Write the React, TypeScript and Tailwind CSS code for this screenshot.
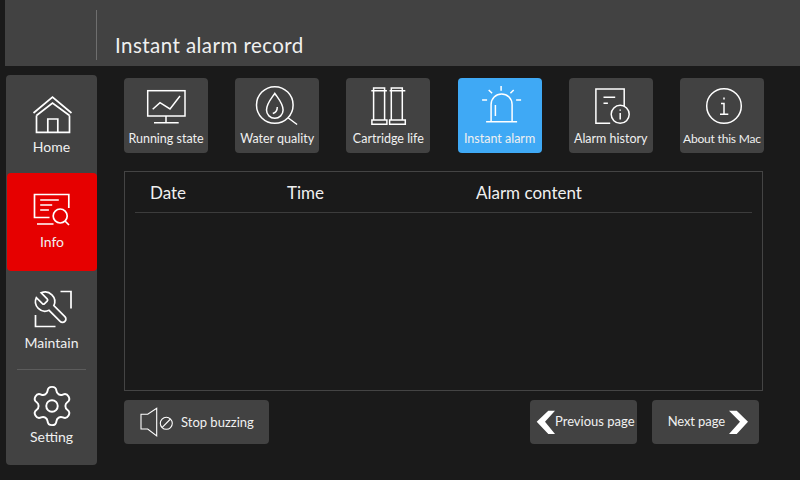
import React from 'react';
import { Settings } from 'lucide-react';

const tabs = [
    {
        label: 'Running state',
        box: '124 78 84 50',
        text: 'text-[12.5px]',
        icon: (
            <>
                <rect x="147.7" y="90.7" width="37.3" height="25.3" />
                <path d="M166 116v6.7M154 122.7h24.7M152.7 109.3l7.3-6.6 10 6.3 10-13" />
            </>
        ),
    },
    {
        label: 'Water quality',
        box: '235.2 78 84 50',
        text: 'text-[12.5px]',
        icon: (
            <>
                <circle cx="275" cy="105" r="18.3" />
                <path d="M288.5 118l8.8 6.5M275 93.3c-3 4.700-8.300 10-8.300 16.700a8.300 8.300 0 0 0 16.600 0c0-6.700-5.300-12-8.300-16.700zM277.500 107c0 3.500-1.500 5.500-4.500 6.500" />
            </>
        ),
    },
    {
        label: 'Cartridge life',
        box: '346.400 78 84 50',
        text: 'text-[12.5px]',
        icon: (
            <path d="M374 120V88h11v32M371.700 90.700h15.600M372.300 120h15v4.300h-15zM391.700 120V88h11v32M390 90.700h15.700M390 120h15.700v4.300H390z" />
        ),
    },
    {
        label: 'Instant alarm',
        active: true,
        box: '457.600 78 84 50',
        text: 'text-[12.5px]',
        icon: (
            <path d="M485.700 121.700h31M490.700 121.700V104.500a10.500 10.500 0 0 1 21 0v17.200M495 105v11M500.700 86v4.700M488.300 90l3.400 3.300M513.300 90l-3.300 3.300M481.700 100h5M515.700 100h5" />
        ),
    },
    {
        label: 'Alarm history',
        box: '568.800 78 84 50',
        text: 'text-[12.5px]',
        icon: (
            <>
                <path d="M624 106.700V89h-28.300v34.300h14.300M603.300 97.300H615M603.300 103.300h4.400M620 113v6.500M620 109.500v1.200" />
                <circle cx="620" cy="114.300" r="9" />
            </>
        ),
    },
    {
        label: 'About this Mac',
        box: '680 78 84 50',
        text: 'text-[12px] tracking-[-0.2px]',
        icon: (
            <>
                <circle cx="724" cy="106" r="17.300" />
                <path d="M721 103.500h3V114M720 114.300h8.300M724 97.500v2" />
            </>
        ),
    },
];

function NavItem({ label, box, active, height, children }: { label: string; box: string; active?: boolean; height: string; children: React.ReactNode }) {
    return (
        <div className={`flex flex-col items-center ${height} ${active ? 'bg-[#e60000] rounded-[4px] ml-px' : ''}`}>
            <svg viewBox={box} className="w-[90px] h-[51px] shrink-0" fill="none" stroke="#fff" strokeWidth="1.700">
                {children}
            </svg>
            <span className="text-[14px] leading-[18px] text-[#f0f0f0]">{label}</span>
        </div>
    );
}

export default function App() {
    return (
        <div className="w-[800px] h-[480px] bg-[#1a1a1a] overflow-hidden font-['Lato',sans-serif]">
            <div className="ml-[5px] h-[66px] bg-[#424242] flex">
                <div className="ml-[91px] mt-[10px] w-px h-[50px] bg-[#6e6e6e]"></div>
                <h1 className="ml-[18px] mt-[31px] text-[20.5px] leading-[28px] text-[#f0f0f0] tracking-[0.45px]">Instant alarm record</h1>
            </div>

            <div className="flex pt-[9px] pl-[6px]">
                <div className="w-[91px] h-[390px] bg-[#424242] rounded-[4px] flex flex-col">
                    <NavItem label="Home" box="6.500 87 90 51" height="h-[98px] pt-[12px]">
                        <path d="M33 113l19-16 19 16M36 115.500v16.800h33v-16.800M36 115.500l16-12.500 17 12.500M47.300 132.300V119h10v13.300" />
                    </NavItem>
                    <NavItem label="Info" box="7.500 182 90 51" height="h-[98px] pt-[9px]" active>
                        <path d="M69.300 208V194.500H35v23h15M40.700 200h18.600M40.700 205h12M40.700 210h8.700M37.500 224h16.500M65.500 221l4 4" />
                        <circle cx="60.700" cy="216" r="7" />
                    </NavItem>
                    <NavItem label="Maintain" box="6.500 283 90 51" height="h-[98px] pt-[12px]">
                        <path d="M60 291.500h10.500V308.500M35 315v11.500h20" />
                        <g transform="translate(70.200 288.800) scale(-1.600 1.600)" strokeWidth="1.060">
                            <path d="M14.700 6.300a1 1 0 0 0 0 1.400l1.600 1.600a1 1 0 0 0 1.400 0l3.770-3.770a6 6 0 0 1-7.940 7.940l-6.910 6.910a2.120 2.120 0 0 1-3-3l6.910-6.910a6 6 0 0 1 7.940-7.940l-3.760 3.760z" />
                        </g>
                    </NavItem>
                    <div className="mx-[11px] h-px bg-[#5c5c5c]"></div>
                    <div className="flex flex-col items-center pt-[13px]">
                        <Settings size={46} color="#fff" strokeWidth={1} />
                        <span className="-mt-px text-[14px] leading-[18px] text-[#f0f0f0]">Setting</span>
                    </div>
                </div>

                <div className="ml-[27px] w-[640px] pt-[3px]">
                    <div className="flex gap-[27.2px]">
                        {tabs.map((tab) => (
                            <div
                                key={tab.label}
                                className={`w-[84px] h-[75px] shrink-0 rounded-[4px] flex flex-col items-center ${tab.active ? 'bg-[#3fa9f5]' : 'bg-[#424242]'}`}
                            >
                                <svg viewBox={tab.box} className="w-[84px] h-[50px] shrink-0" fill="none" stroke="#fff" strokeWidth="1.500">
                                    {tab.icon}
                                </svg>
                                <span className={`mt-[2px] leading-[18px] whitespace-nowrap text-[#f0f0f0] ${tab.text}`}>{tab.label}</span>
                            </div>
                        ))}
                    </div>

                    <div className="mt-[18px] w-[639px] h-[220px] border border-[#444444] px-[10px]">
                        <div className="flex h-[41px] pt-px items-center border-b border-[#3c3c3c] text-[17px] text-[#f0f0f0]">
                            <span className="ml-[15px] w-[137px]">Date</span>
                            <span className="w-[189px]">Time</span>
                            <span>Alarm content</span>
                        </div>
                    </div>

                    <div className="mt-[9px] flex text-[13px] text-[#f0f0f0]">
                        <div className="w-[145px] h-[44px] bg-[#424242] rounded-[4px] flex items-center">
                            <svg viewBox="124 400 50 44" className="w-[50px] h-[44px] shrink-0" fill="none" stroke="#fff" strokeWidth="1.100">
                                <path d="M141 414.300h6.700l9-6v27.700l-9-7H141z" />
                                <circle cx="166.300" cy="423.300" r="6" />
                                <path d="M162 427.700l8.500-8.700" />
                            </svg>
                            <span className="ml-[7px] pt-[2px]">Stop buzzing</span>
                        </div>
                        <div className="ml-[261px] w-[107px] h-[44px] bg-[#424242] rounded-[4px] flex items-center">
                            <svg viewBox="530 400 25 44" className="w-[25px] h-[44px] shrink-0" fill="#fff">
                                <polygon points="536.700,421.700 548.300,410.700 555,410.700 545,421.700 555,434 548.300,434" />
                            </svg>
                            <span className="whitespace-nowrap">Previous page</span>
                        </div>
                        <div className="ml-[15px] w-[107px] h-[44px] bg-[#424242] rounded-[4px] flex items-center justify-end">
                            <span className="mr-[3px] whitespace-nowrap tracking-[-0.1px]">Next page</span>
                            <svg viewBox="728 400 31 44" className="w-[31px] h-[44px] shrink-0" fill="#fff">
                                <polygon points="729,410.700 736.700,410.700 748,421.700 736.700,434 729,434 740,421.700" />
                            </svg>
                        </div>
                    </div>
                </div>
            </div>
        </div>
    );
}
